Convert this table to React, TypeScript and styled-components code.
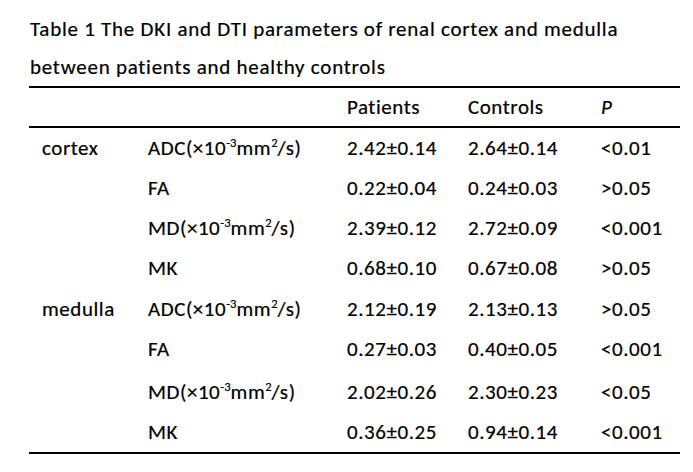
import React from "react";
import styled, { createGlobalStyle } from "styled-components";

const Global = createGlobalStyle`
  html, body {
    margin: 0;
    background: #fff;
  }
  body {
    font-family: Carlito, "Open Sans", "Liberation Sans", sans-serif;
    color: #000;
  }
`;

const Page = styled.div`
  width: 693px;
  height: 472px;
  padding: 10px 13px 0 29px;
  box-sizing: border-box;
`;

const Caption = styled.div`
  font-size: 21px;
  letter-spacing: 0.75px;
  line-height: 38px;
  padding-left: 1px;
  -webkit-text-stroke: 0.2px #000;
`;

const Table = styled.table`
  width: 651px;
  border-collapse: collapse;
  table-layout: fixed;
  font-size: 21px;
  letter-spacing: 0.55px;
  -webkit-text-stroke: 0.2px #000;
  border-top: 2px solid #000;
  border-bottom: 2px solid #000;
`;

const Head = styled.thead`
  tr {
    border-bottom: 2px solid #000;
  }
`;

const Row = styled.tr<{ $tall?: boolean }>`
  height: ${({ $tall }) => ($tall ? "43px" : "40.4px")};
  td {
    vertical-align: ${({ $tall }) => ($tall ? "bottom" : "middle")};
    padding-bottom: ${({ $tall }) => ($tall ? "7px" : "0")};
  }
`;

const HeadCell = styled.th<{ $italic?: boolean }>`
  text-align: left;
  font-weight: normal;
  font-style: ${({ $italic }) => ($italic ? "italic" : "normal")};
  padding: 0;
  height: 38px;
`;

const Cell = styled.td`
  padding: 0;
  white-space: nowrap;
`;

const GroupCell = styled(Cell)`
  padding-left: 13px;
`;

const Sup = styled.sup`
  font-size: 0.6em;
  vertical-align: 0.6em;
  line-height: 0;
  letter-spacing: 0;
`;

const widths = [119, 199, 121, 133, 79];

const Unit = ({ name }: { name: string }) => (
  <>
    {name}(×10<Sup>-3</Sup>mm<Sup>2</Sup>/s)
  </>
);

type Item = {
  group?: string;
  param: React.ReactNode;
  pat: string;
  con: string;
  p: string;
  tall?: boolean;
};

const rows: Item[] = [
  { group: "cortex", param: <Unit name="ADC" />, pat: "2.42±0.14", con: "2.64±0.14", p: "<0.01" },
  { param: "FA", pat: "0.22±0.04", con: "0.24±0.03", p: ">0.05" },
  { param: <Unit name="MD" />, pat: "2.39±0.12", con: "2.72±0.09", p: "<0.001" },
  { param: "MK", pat: "0.68±0.10", con: "0.67±0.08", p: ">0.05" },
  { group: "medulla", param: <Unit name="ADC" />, pat: "2.12±0.19", con: "2.13±0.13", p: ">0.05" },
  { param: "FA", pat: "0.27±0.03", con: "0.40±0.05", p: "<0.001" },
  { param: <Unit name="MD" />, pat: "2.02±0.26", con: "2.30±0.23", p: "<0.05", tall: true },
  { param: "MK", pat: "0.36±0.25", con: "0.94±0.14", p: "<0.001" },
];

export default function App() {
  return (
    <Page>
      <Global />
      <Caption>
        Table 1 The DKI and DTI parameters of renal cortex and medulla
        <br />
        between patients and healthy controls
      </Caption>
      <Table>
        <colgroup>
          {widths.map((w, i) => (
            <col key={i} style={{ width: w }} />
          ))}
        </colgroup>
        <Head>
          <tr>
            <HeadCell />
            <HeadCell />
            <HeadCell>Patients</HeadCell>
            <HeadCell>Controls</HeadCell>
            <HeadCell $italic>P</HeadCell>
          </tr>
        </Head>
        <tbody>
          {rows.map((r, i) => (
            <Row key={i} $tall={r.tall}>
              <GroupCell>{r.group ?? ""}</GroupCell>
              <Cell>{r.param}</Cell>
              <Cell>{r.pat}</Cell>
              <Cell>{r.con}</Cell>
              <Cell>{r.p}</Cell>
            </Row>
          ))}
        </tbody>
      </Table>
    </Page>
  );
}
